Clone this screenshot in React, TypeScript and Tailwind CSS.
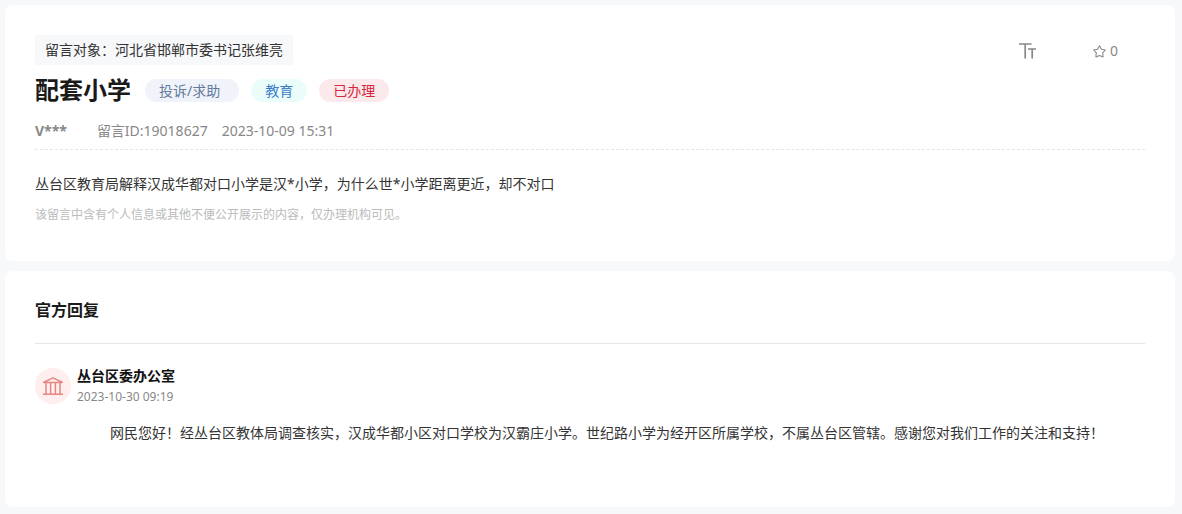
const tags = [
  { label: "投诉/求助", className: "bg-[#f0f4fa] text-[#66799a] pl-[14px] pr-[19px]" },
  { label: "教育", className: "bg-[#ebfdfb] text-[#3b7bca] px-[14px]" },
  { label: "已办理", className: "bg-[#fbe9eb] text-[#d7263d] px-[14px]" },
];

function TextSizeIcon() {
  return (
    <svg width="18" height="16" viewBox="0 0 18 16" fill="none" stroke="#888" strokeWidth="1.7" aria-hidden="true">
      <path d="M0 1H12.5M6.2 1V15.5" />
      <path d="M9 6H17M13.2 6V15.5" />
    </svg>
  );
}

function StarIcon() {
  return (
    <svg width="13" height="13" viewBox="0 0 13 13" fill="none" stroke="#888" strokeWidth="1.1" strokeLinejoin="round" aria-hidden="true">
      <path d="M6.5 .8L8.5 4.2L12.3 5L9.7 7.8L10.1 11.9L6.5 10.4L2.9 11.9L3.3 7.8L.7 5L4.5 4.2Z" />
    </svg>
  );
}

function InstitutionIcon() {
  return (
    <svg width="20" height="18" viewBox="0 0 20 18" fill="none" stroke="#e58781" strokeWidth="1.5" aria-hidden="true">
      <path d="M.8 5.2L10 .9L19.2 5.2V5.6H.8Z" strokeLinejoin="round" />
      <path d="M0 17.2H20" />
      <path d="M3 5.6V17.4M7.6 5.6V17.4M12.4 5.6V17.4M17 5.6V17.4" />
    </svg>
  );
}

function MessageCard() {
  return (
    <article className="bg-white rounded-lg px-[30px] pt-[30px] pb-9">
      <div className="flex items-center justify-between pr-[27px]">
        <p className="bg-[#f7f8fa] rounded-xs px-[10px] leading-[30px] text-[#333]">
          留言对象：河北省邯郸市委书记张维亮
        </p>
        <div className="flex items-center gap-14 pt-[2px] text-[#888]">
          <button type="button" aria-label="字号" className="cursor-pointer">
            <TextSizeIcon />
          </button>
          <button type="button" aria-label="收藏" className="flex items-center gap-1 leading-5 cursor-pointer">
            <StarIcon />
            <span>0</span>
          </button>
        </div>
      </div>

      <div className="flex items-center gap-[14px] pt-[7px]">
        <h1 className="text-2xl leading-9 font-bold text-[#1a1a1a]">配套小学</h1>
        <ul className="flex items-center gap-3">
          {tags.map((tag) => (
            <li key={tag.label} className={`rounded-full leading-[23px] ${tag.className}`}>
              {tag.label}
            </li>
          ))}
        </ul>
      </div>

      <div className="flex items-center pt-[13px] pb-2 leading-5 text-[#888] border-b border-dashed border-[#e5e5e5]">
        <span className="font-bold mr-[30px]">V***</span>
        <span className="mr-[14px]">留言ID:19018627</span>
        <time>2023-10-09 15:31</time>
      </div>

      <p className="pt-6 leading-5 text-[#333]">
        丛台区教育局解释汉成华都对口小学是汉*小学，为什么世*小学距离更近，却不对口
      </p>
      <p className="pt-[11px] text-xs leading-5 text-[#bbb]">
        该留言中含有个人信息或其他不便公开展示的内容，仅办理机构可见。
      </p>
    </article>
  );
}

function ReplyCard() {
  return (
    <section className="bg-white rounded-lg px-[30px] pt-[27px] pb-16">
      <h2 className="text-base leading-6 pb-[21px] font-bold text-[#1a1a1a] border-b border-[#e5e5e5]">官方回复</h2>
      <div className="flex items-start gap-[6px] pt-[22px]">
        <span className="flex items-center justify-center w-9 h-9 mt-[2px] rounded-full bg-[#feefee] shrink-0">
          <InstitutionIcon />
        </span>
        <div>
          <h3 className="leading-5 font-bold text-[#111]">丛台区委办公室</h3>
          <time className="block text-xs leading-[22px] text-[#888]">2023-10-30 09:19</time>
        </div>
      </div>
      <p className="pl-[75px] pt-[15px] leading-5 text-[#333]">
        网民您好！经丛台区教体局调查核实，汉成华都小区对口学校为汉霸庄小学。世纪路小学为经开区所属学校，不属丛台区管辖。感谢您对我们工作的关注和支持！
      </p>
    </section>
  );
}

export default function App() {
  return (
    <main
      lang="zh-CN"
      className="min-h-screen flex flex-col gap-[10px] bg-[#f7f8fa] pl-[5px] pr-[7px] py-[5px] text-sm font-['Noto_Sans','Noto_Sans_CJK_SC',sans-serif]"
    >
      <MessageCard />
      <ReplyCard />
    </main>
  );
}
